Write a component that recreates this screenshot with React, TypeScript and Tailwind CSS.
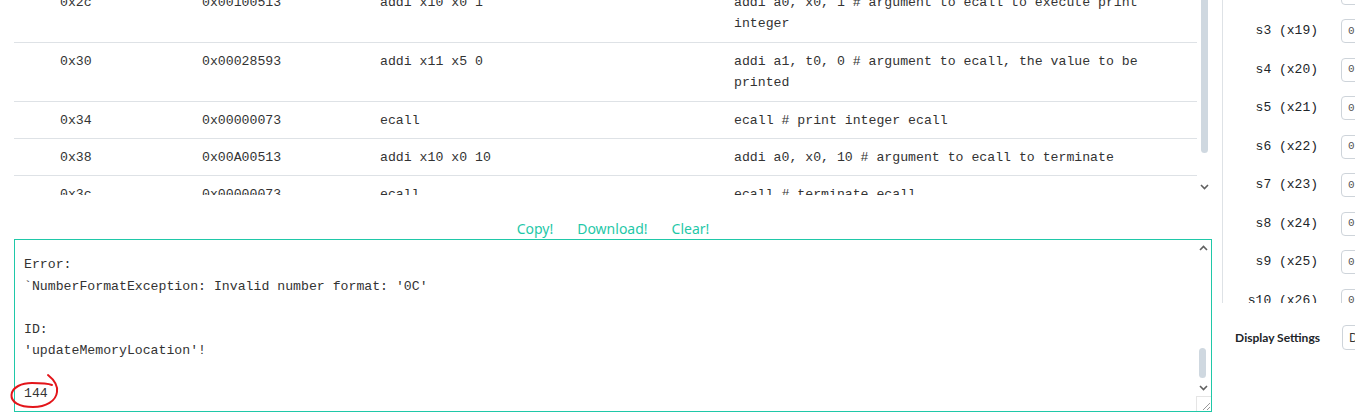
import React from 'react';

const mono = "font-['Liberation_Mono','DejaVu_Sans_Mono',monospace]";
const sans = "font-['Noto_Sans','Open_Sans',sans-serif]";

const rows = [
    { addr: '0x2c', code: '0x00100513', basic: 'addi x10 x0 1', src: 'addi a0, x0, 1 # argument to ecall to execute print integer', tall: true },
    { addr: '0x30', code: '0x00028593', basic: 'addi x11 x5 0', src: 'addi a1, t0, 0 # argument to ecall, the value to be printed', tall: true },
    { addr: '0x34', code: '0x00000073', basic: 'ecall', src: 'ecall # print integer ecall', tall: false },
    { addr: '0x38', code: '0x00A00513', basic: 'addi x10 x0 10', src: 'addi a0, x0, 10 # argument to ecall to terminate', tall: false },
    { addr: '0x3c', code: '0x00000073', basic: 'ecall', src: 'ecall # terminate ecall', tall: false }
];

const registers = ['s2 (x18)', 's3 (x19)', 's4 (x20)', 's5 (x21)', 's6 (x22)', 's7 (x23)', 's8 (x24)', 's9 (x25)', 's10 (x26)'];

const consoleText = "Error:\n`NumberFormatException: Invalid number format: '0C'\n\nID:\n'updateMemoryLocation'!\n\n144";

function Chevron({ up }: { up?: boolean }) {
    return (
        <svg width="9" height="6" viewBox="0 0 9 6" className="block mx-auto">
            <polyline
                points={up ? '1,5 4.5,1.5 8,5' : '1,1 4.5,4.5 8,1'}
                fill="none"
                stroke="#606060"
                strokeWidth={1.6}
            />
        </svg>
    );
}

export default function App() {
    return (
        <div className="w-[1355px] h-[412px] overflow-hidden bg-white flex text-[#333]">
            {/* Left: program table + console */}
            <div className="w-[1222px] shrink-0 pl-[14px] pr-[10px] flex flex-col">
                {/* Table */}
                <div className="h-[195px] flex overflow-hidden">
                    <div className="w-[1183px] overflow-hidden">
                        <div className={`-mt-[16px] ${mono} text-[13.2px] leading-[21px]`}>
                            {rows.map((r) => (
                                <div
                                    key={r.addr}
                                    className={`grid grid-cols-[142px_178px_354px_1fr] pl-[46px] pr-[24px] pt-[8px] border-b border-[#dee2e6] ${r.tall ? 'pb-[8px]' : 'pb-[7px]'}`}
                                >
                                    <div>{r.addr}</div>
                                    <div>{r.code}</div>
                                    <div>{r.basic}</div>
                                    <div>{r.src}</div>
                                </div>
                            ))}
                        </div>
                    </div>
                    <div className="w-[15px] flex flex-col pb-[5px]">
                        <div className="ml-[4px] w-[7px] h-[153px] rounded-b-[4px] bg-[#cfd8e0]" />
                        <div className="flex-1" />
                        <Chevron />
                    </div>
                </div>

                {/* Buttons */}
                <div className={`h-[44px] flex items-end justify-center gap-6 ${sans} text-[14px] leading-[20px] text-[#1fc8a8]`}>
                    <button>Copy!</button>
                    <button>Download!</button>
                    <button>Clear!</button>
                </div>

                {/* Console */}
                <div className="relative h-[173px] border border-[#1fc8a8] flex">
                    <div className={`flex-1 pl-[9px] pt-[14px] ${mono} text-[13.2px] leading-[21.5px] whitespace-pre overflow-hidden`}>
                        {consoleText}
                    </div>
                    <div className="w-[15px] flex flex-col pt-[5px]">
                        <Chevron up />
                        <div className="flex-1" />
                        <div className="ml-[3px] w-[7px] h-[30px] rounded-[4px] bg-[#cfd8e0]" />
                        <div className="mt-[7px] mb-[5px]">
                            <Chevron />
                        </div>
                        <div className="h-[15px] border-t border-l border-[#e5e5e5] flex items-end justify-end">
                            <svg width="10" height="10" viewBox="0 0 10 10">
                                <line x1="2" y1="9" x2="9" y2="2" stroke="#999" strokeWidth={1} />
                                <line x1="6" y1="9" x2="9" y2="6" stroke="#999" strokeWidth={1} />
                            </svg>
                        </div>
                    </div>
                    {/* hand-drawn annotation */}
                    <svg className="absolute left-[-15px] top-[131px]" width="70" height="42" viewBox="0 0 70 42">
                        <path
                            d="M48 4 C53 8 58 14 57 21 C56 30 46 36 33 36 C19 36 11 31 11.5 24 C12 16 22 12 32 12 C40 12 47 12 52 14"
                            fill="none"
                            stroke="#e3151a"
                            strokeWidth={2}
                            strokeLinecap="round"
                        />
                    </svg>
                </div>
            </div>

            {/* Right: registers */}
            <div className="flex-1 flex flex-col overflow-hidden">
                <div className="h-[303px] border-l border-[#dee2e6] overflow-hidden">
                    <div className="-mt-[26.75px]">
                        {registers.map((reg) => (
                            <div key={reg} className="h-[38.5px] flex items-center">
                                <div className={`w-[95px] shrink-0 text-right ${mono} text-[13px] text-[#212529]`}>{reg}</div>
                                <div className="ml-[23px] w-[80px] shrink-0 h-[24px] border border-[#ced4da] rounded-[4px] flex items-center pl-[6px]">
                                    <span className={`${mono} text-[11px] text-[#555]`}>0</span>
                                </div>
                            </div>
                        ))}
                    </div>
                </div>
                <div className="pt-[22px] flex items-center">
                    <div className="w-[98px] shrink-0 text-right font-['Lato','Noto_Sans',sans-serif] text-[12px] font-bold leading-[25px] text-[#212529]">
                        Display Settings
                    </div>
                    <div className={`ml-[22px] w-[80px] shrink-0 h-[25px] border border-[#ced4da] rounded-[4px] flex items-center pl-[6px] ${sans} text-[12px]`}>
                        Decimal
                    </div>
                </div>
            </div>
        </div>
    );
}
